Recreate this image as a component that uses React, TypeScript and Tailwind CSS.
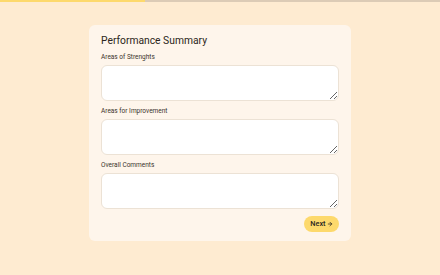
import React from 'react';
import { ArrowRight } from 'lucide-react';

const fields = ['Areas of Strenghts', 'Areas for Improvement', 'Overall Comments'];

export default function App() {
  return (
    <div className="min-h-[275px] w-full bg-[#feebd1] font-['Roboto',sans-serif] text-[#2b2620]">
      <div className="h-[2px] w-full bg-[#dccbb6]">
        <div className="h-full w-[33%] bg-[#fdd96c]" />
      </div>
      <div className="flex justify-center pt-[23px]">
        <div className="flex w-[262px] flex-col rounded-[6px] bg-[#fef5eb] px-[12px] pb-[9px] pt-[9px]">
          <h1 className="text-[10.3px] leading-[14px] font-normal">Performance Summary</h1>
          <div className="mt-[1px] flex flex-col">
            {fields.map((f) => (
              <div key={f} className="flex flex-col">
                <label className="mt-[4px] text-[6.5px] leading-[8px] text-[#3a332b]">{f}</label>
                <textarea className="mt-[4px] mb-[2px] h-[36px] w-full rounded-[6px] border border-[#ece2d5] bg-white" />
              </div>
            ))}
          </div>
          <div className="mt-[5px] flex justify-end">
            <button className="flex h-[16px] items-center gap-[1.5px] rounded-full bg-[#fdd96c] px-[6px] text-[7.3px] font-medium text-[#2b2620]">
              Next <ArrowRight size={6} strokeWidth={3} />
            </button>
          </div>
        </div>
      </div>
    </div>
  );
}
